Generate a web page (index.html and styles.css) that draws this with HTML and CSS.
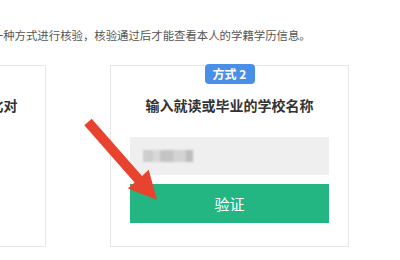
FILE: index.html
```html
<!DOCTYPE html>
<html lang="zh-CN">
<head>
<meta charset="utf-8">
<link rel="stylesheet" href="styles.css">
</head>
<body>
<div class="page">
  <p class="intro">任选一种方式进行核验，核验通过后才能查看本人的学籍学历信息。</p>
  <div class="cards">
    <div class="card">
      <span class="badge">方式 1</span>
      <h3 class="title">通过手机学信网进行人像比对</h3>
    </div>
    <div class="card">
      <span class="badge">方式 2</span>
      <h3 class="title">输入就读或毕业的学校名称</h3>
      <div class="input"><span class="mosaic"></span></div>
      <div class="btn">验证</div>
    </div>
    <div class="card"></div>
  </div>
  <svg class="arrow" width="400" height="260" viewBox="0 0 400 260">
    <polygon points="91.7,118.7 142,175.9 148.7,169.8 157,200 127.9,188.6 134.6,182.5 84.3,125.3" fill="#e8432f"/>
  </svg>
</div>
</body>
</html>
```

FILE: styles.css
```css
html, body {
  margin: 0;
  padding: 0;
  background: #fff;
  overflow: hidden;
}
body {
  width: 400px;
  height: 260px;
  font-family: "Noto Sans CJK SC", "Noto Sans", sans-serif;
}
.page {
  position: relative;
  width: 400px;
  height: 260px;
  padding-top: 27px;
  box-sizing: border-box;
}
.intro {
  margin: 0 0 0 -31px;
  font-size: 11.4px;
  line-height: 16px;
  color: #555;
  white-space: nowrap;
}
.cards {
  display: flex;
  gap: 64px;
  margin-top: 22px;
  margin-left: -193px;
}
.card {
  position: relative;
  flex: 0 0 239px;
  box-sizing: border-box;
  height: 182px;
  border: 1px solid #e6e6e6;
  padding: 29px 19px 0;
  display: flex;
  flex-direction: column;
  background: #fff;
}
.badge {
  position: absolute;
  top: -2px;
  left: 50%;
  transform: translateX(-50%);
  width: 50px;
  height: 20px;
  border-radius: 4px;
  background: #4a8fe7;
  color: #fff;
  font-size: 12px;
  font-weight: 700;
  line-height: 20px;
  text-align: center;
}
.title {
  margin: 0 0 22px;
  font-size: 14px;
  line-height: 20px;
  font-weight: 700;
  color: #333;
  text-align: center;
  white-space: nowrap;
}
.input {
  height: 38px;
  background: #efefef;
  display: flex;
  align-items: center;
  padding-left: 13px;
}
.mosaic {
  width: 50px;
  height: 12px;
  background: linear-gradient(90deg, #cdcdcd 0 20%, #d8d8d8 20% 35%, #c4c4c4 35% 60%, #d3d3d3 60% 85%, #bdbdbd 85% 100%);
  filter: blur(0.8px);
}
.btn {
  margin-top: 9px;
  height: 39px;
  background: #23b683;
  color: #fff;
  font-size: 15px;
  line-height: 39px;
  text-align: center;
}
.arrow {
  position: absolute;
  left: 0;
  top: 0;
  pointer-events: none;
}
```
